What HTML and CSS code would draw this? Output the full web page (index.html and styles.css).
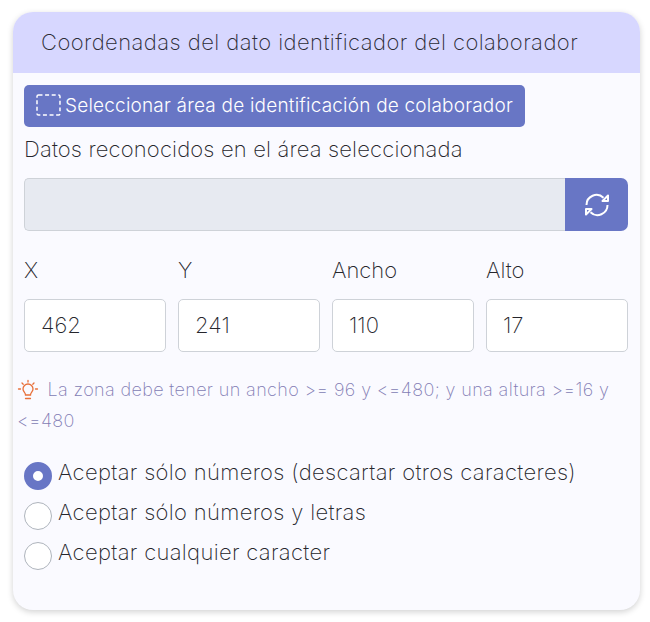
FILE: index.html
```html
<!DOCTYPE html>
<html lang="en">
<head>
  <meta charset="UTF-8">
  <title>Coordenadas</title>
  <link rel="stylesheet" href="styles.css">
</head>
<body>
  <div class="card">
    <div class="card-header">Coordenadas del dato identificador del colaborador</div>
    <div class="card-body">
      <button class="select-btn">
        <svg width="25" height="22" viewBox="0 0 25 22" fill="none" stroke="#fff" stroke-width="1.500"><rect x="1" y="1" width="23" height="20" rx="1.500" stroke-dasharray="4 2.600"/></svg>
        <span>Seleccionar área de identificación de colaborador</span>
      </button>
      <div class="label">Datos reconocidos en el área seleccionada</div>
      <div class="input-group">
        <div class="readonly-input"></div>
        <button class="refresh-btn">
          <svg width="26" height="26" viewBox="0 0 26 26" fill="none" stroke="#fff" stroke-width="2" stroke-linejoin="round"><path d="M2.500 13a10 10 0 0 1 17-7.200"/><path d="M23.500 13a10 10 0 0 1-17 7.200"/><path d="M24 3.500v5.500h-5.500z"/><path d="M2 22.500v-5.500h5.500z"/></svg>
        </button>
      </div>
      <div class="coords">
        <div class="coord"><label>X</label><div class="field">462</div></div>
        <div class="coord"><label>Y</label><div class="field">241</div></div>
        <div class="coord"><label>Ancho</label><div class="field">110</div></div>
        <div class="coord"><label>Alto</label><div class="field">17</div></div>
      </div>
      <p class="note">
        <svg class="bulb" width="22" height="22" viewBox="0 0 22 22" fill="none" stroke="#e8703a" stroke-width="1.300" stroke-linecap="round"><path d="M8.500 16c0-2.500-2.500-3.200-2.500-6a5 5 0 0 1 10 0c0 2.800-2.500 3.500-2.500 6z"/><path d="M8.500 19.500h5M11 1.500v1.500M3.500 10H1.500M20.500 10h-2M5 4l1.200 1.200M17 4l-1.200 1.200"/></svg>
        La zona debe tener un ancho &gt;= 96 y &lt;=480; y una altura &gt;=16 y &lt;=480
      </p>
      <div class="radios">
        <div class="radio-row"><span class="radio checked"></span>Aceptar sólo números (descartar otros caracteres)</div>
        <div class="radio-row"><span class="radio"></span>Aceptar sólo números y letras</div>
        <div class="radio-row"><span class="radio"></span>Aceptar cualquier caracter</div>
      </div>
    </div>
  </div>
</body>
</html>
```

FILE: styles.css
```css
body {
  margin: 0;
  padding: 12px 10px 12px 13px;
  background: #fff;
  font-family: Inter, sans-serif;
  font-weight: 250;
  color: #26262c;
}
.card {
  background: #fafaff;
  border-radius: 20px;
  box-shadow: 0 2px 6px rgba(0, 0, 0, 0.18);
  height: 598px;
  overflow: hidden;
}
.card-header {
  background: #d7d7ff;
  height: 61px;
  line-height: 61px;
  padding-left: 28px;
  font-size: 22px;
  letter-spacing: 0.44px;
  color: #2c2c36;
}
.card-body {
  padding: 12px 12px 0 11px;
}
.select-btn {
  display: flex;
  align-items: center;
  gap: 4px;
  height: 42px;
  width: 501px;
  padding: 0 12px 2px;
  border: none;
  border-radius: 5px;
  background: #6876c5;
  color: #fff;
  font-family: inherit;
  font-size: 19px;
  font-weight: 300;
  letter-spacing: 0.2px;
  white-space: nowrap;
}
.label {
  font-size: 22px;
  letter-spacing: 0.15px;
  line-height: 44px;
}
.input-group {
  display: flex;
  height: 53px;
  margin-top: 7px;
}
.readonly-input {
  flex: 1;
  background: #e7eaf1;
  border: 1px solid #ced2d8;
  border-right: none;
  border-radius: 5px 0 0 5px;
}
.refresh-btn {
  width: 63px;
  border: none;
  border-radius: 0 7px 7px 0;
  background: #6876c5;
  display: flex;
  align-items: center;
  justify-content: center;
}
.coords {
  display: flex;
  gap: 12px;
  margin-top: 20px;
}
.coord {
  flex: 1;
}
.coord label {
  display: block;
  font-size: 22px;
  line-height: 38px;
  margin-bottom: 10px;
}
.field {
  height: 51px;
  line-height: 51px;
  padding-left: 16px;
  background: #fff;
  border: 1px solid #ced2d8;
  border-radius: 5px;
  font-size: 22px;
}
.note {
  margin: 22px 0 0 -7px;
  font-size: 18px;
  letter-spacing: 0.37px;
  line-height: 31px;
  color: #827cb4;
}
.bulb {
  vertical-align: -5px;
  margin-right: 3px;
}
.radios {
  margin-top: 21px;
}
.radio-row {
  display: flex;
  align-items: flex-start;
  gap: 6px;
  height: 40px;
  line-height: 30px;
  font-size: 22px;
  letter-spacing: 0.32px;
}
.radio {
  width: 28px;
  height: 28px;
  margin-top: 5px;
  box-sizing: border-box;
  border-radius: 50%;
  border: 1px solid #aeb4bc;
  background: #fff;
  flex-shrink: 0;
}
.radio.checked {
  border: 9px solid #6876c5;
}
```
